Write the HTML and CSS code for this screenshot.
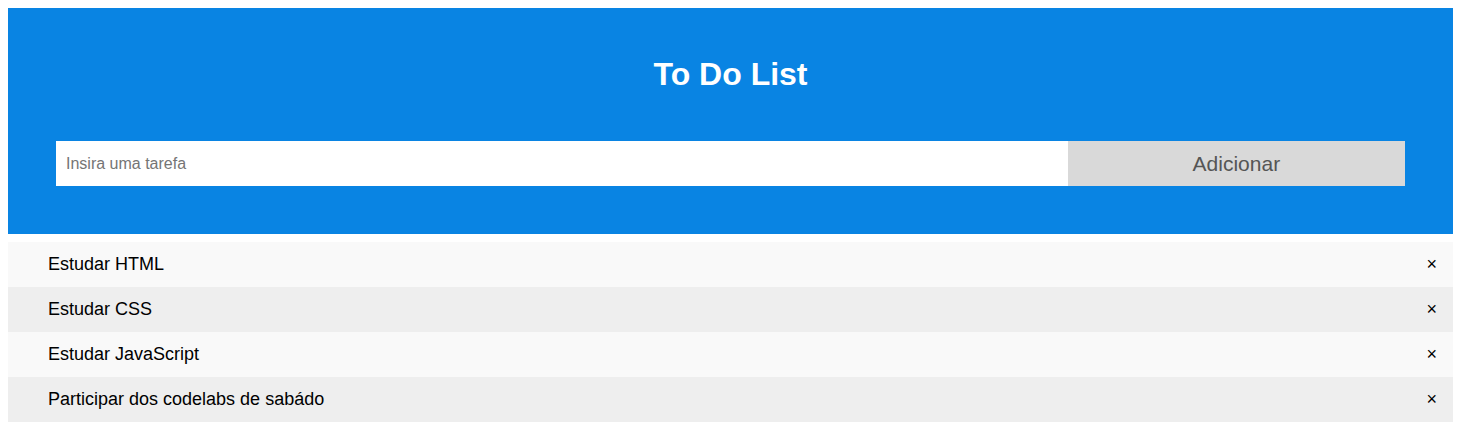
FILE: index.html
```html
<!DOCTYPE html>
<html lang="pt">
<head>
<meta charset="utf-8">
<title>To Do List</title>
<link rel="stylesheet" href="styles.css">
</head>
<body>
<div class="header">
  <h2 class="title">To Do List</h2>
  <div class="form">
    <input class="task-input" type="text" placeholder="Insira uma tarefa">
    <span class="add-btn">Adicionar</span>
  </div>
</div>
<ul class="list">
  <li class="item"><span class="item-text">Estudar HTML</span><span class="close">×</span></li>
  <li class="item"><span class="item-text">Estudar CSS</span><span class="close">×</span></li>
  <li class="item"><span class="item-text">Estudar JavaScript</span><span class="close">×</span></li>
  <li class="item"><span class="item-text">Participar dos codelabs de sabádo</span><span class="close">×</span></li>
</ul>
</body>
</html>
```
FILE: styles.css
```css
* { box-sizing: border-box; }
body {
  margin: 8px;
  font-family: "Liberation Sans", Arial, sans-serif;
  background: #fff;
}
.header {
  background: #0984e3;
  padding: 48px;
  color: #fff;
  text-align: center;
}
.title {
  margin: 0 0 48px;
  font-size: 32px;
  font-weight: bold;
  line-height: 37px;
}
.form {
  display: flex;
}
.task-input {
  width: 75%;
  height: 45px;
  border: none;
  border-radius: 0;
  padding: 10px;
  font-family: "Liberation Sans", Arial, sans-serif;
  font-size: 16px;
  color: #000;
  background: #fff;
  outline: none;
}
.task-input::placeholder { color: #757575; }
.add-btn {
  width: 25%;
  height: 45px;
  display: flex;
  align-items: center;
  justify-content: center;
  background: #d9d9d9;
  color: #555;
  font-size: 21px;
}
.list {
  list-style: none;
  margin: 8px 0 0;
  padding: 0;
}
.item {
  display: flex;
  justify-content: space-between;
  padding: 12px 0 12px 40px;
  font-size: 18px;
  color: #000;
  background: #f9f9f9;
}
.item:nth-child(even) { background: #eee; }
.close {
  padding: 0 16px;
}
```
